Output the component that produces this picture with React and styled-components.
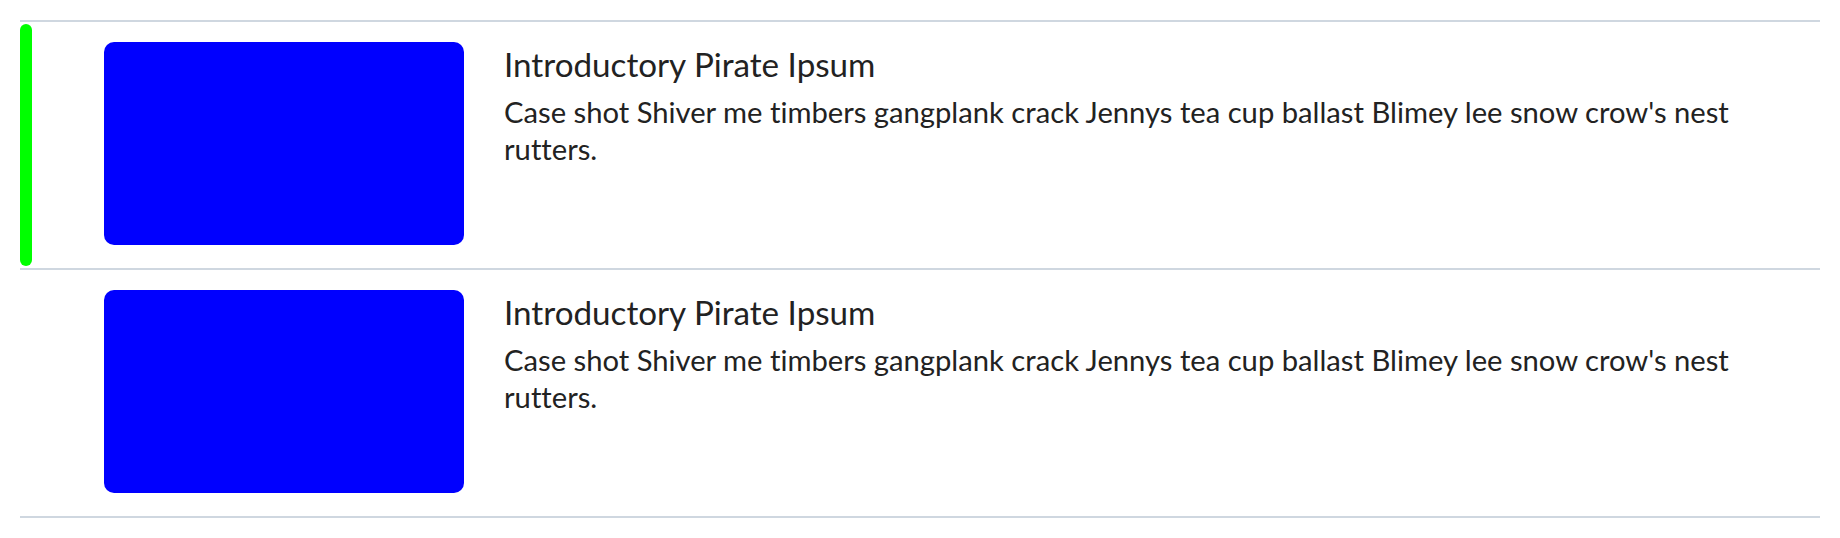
import React from "react";
import styled, { createGlobalStyle } from "styled-components";

const GlobalStyle = createGlobalStyle`
  body {
    margin: 0;
    background: #fff;
    font-family: Lato, "Noto Sans", sans-serif;
    color: #222;
  }
`;

const items = [
  {
    id: 1,
    title: "Introductory Pirate Ipsum",
    text: "Case shot Shiver me timbers gangplank crack Jennys tea cup ballast Blimey lee snow crow's nest rutters.",
    active: true,
  },
  {
    id: 2,
    title: "Introductory Pirate Ipsum",
    text: "Case shot Shiver me timbers gangplank crack Jennys tea cup ballast Blimey lee snow crow's nest rutters.",
    active: false,
  },
];

const App = () => {
  return (
    <>
      <GlobalStyle />
      <Page>
        <List>
          {items.map((item) => (
            <Item key={item.id}>
              {item.active && <ActiveBar />}
              <Thumb />
              <Body>
                <Title>{item.title}</Title>
                <Text>{item.text}</Text>
              </Body>
            </Item>
          ))}
        </List>
      </Page>
    </>
  );
};

export default App;

const Page = styled.div`
  padding: 20px;
`;

const List = styled.div`
  display: flex;
  flex-direction: column;
  border-top: 2px solid #cfd7e0;
`;

const Item = styled.div`
  position: relative;
  display: flex;
  align-items: flex-start;
  gap: 40px;
  padding: 20px 20px 20px 84px;
  height: 248px;
  box-sizing: border-box;
  border-bottom: 2px solid #cfd7e0;
`;

const ActiveBar = styled.span`
  position: absolute;
  left: 0;
  top: 2px;
  bottom: 2px;
  width: 12px;
  border-radius: 6px;
  background: #00ff00;
`;

const Thumb = styled.div`
  flex: 0 0 360px;
  height: 203px;
  border-radius: 10px;
  background: #0000ff;
`;

const Body = styled.div`
  flex: 1;
  min-width: 0;
  font-variant-ligatures: none;
`;

const Title = styled.h3`
  margin: 0 0 7px;
  font-size: 33.2px;
  font-weight: 400;
  line-height: 44px;
`;

const Text = styled.p`
  margin: 0;
  font-size: 29.2px;
  line-height: 37px;
`;
